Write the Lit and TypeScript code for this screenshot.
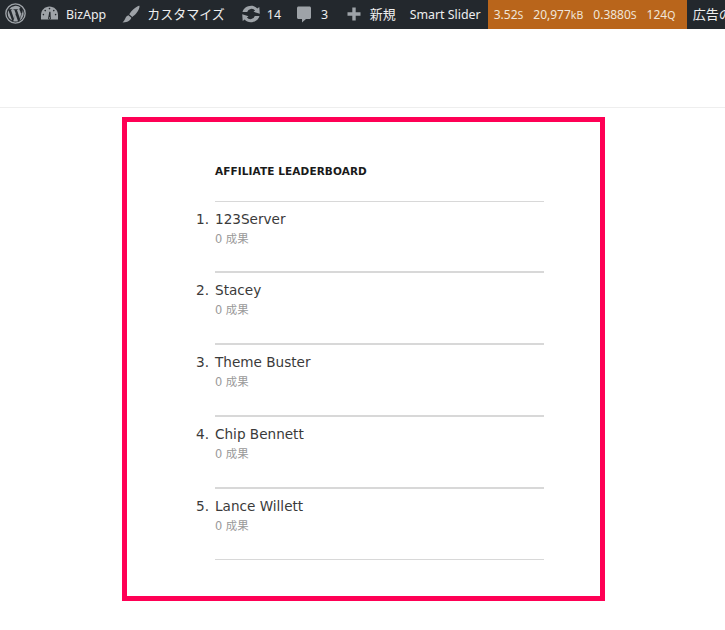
import { LitElement, html, css, svg } from "lit";
import { customElement } from "lit/decorators.js";

const ICONS = {
  wp: svg`<circle cx="10" cy="10" r="9.2" fill="none" stroke="currentColor" stroke-width="1.3"/><path fill="currentColor" d="M2.6 10c0 2.900 1.700 5.500 4.200 6.700L3.200 7A7.400 7.400 0 0 0 2.600 10zM15 9.600c0-.9-.3-1.600-.6-2.100-.4-.6-.7-1.100-.7-1.700 0-.7.500-1.300 1.200-1.300h.1A7.400 7.400 0 0 0 4 6h.5c.8 0 2-.1 2-.1.4 0 .5.600.1.600 0 0-.4.100-.9.100l2.800 8.300 1.700-5-1.200-3.300c-.4 0-.8-.1-.8-.1-.4 0-.4-.6 0-.6 0 0 1.300.1 2 .1.800 0 2-.1 2-.1.400 0 .5.600.1.600 0 0-.4.100-.9.100l2.800 8.200.8-2.600c.3-1.100.6-1.900.6-2.600zM10.100 10.700l-2.300 6.700a7.400 7.400 0 0 0 4.600-.1l-.1-.1zM16.700 6.400l.1.800c0 .8-.1 1.600-.6 2.800l-2.300 6.600A7.400 7.400 0 0 0 16.700 6.400z"/>`,
  gauge: svg`<path fill="currentColor" d="M1 15.500V11C1 6 5 2.500 9.500 2.500S18 6 18 11v4.500z"/><g fill="#23282d"><circle cx="9.500" cy="4.600" r=".8"/><circle cx="5.200" cy="6.600" r=".8"/><circle cx="13.800" cy="6.600" r=".8"/><circle cx="3.400" cy="10.600" r=".8"/><circle cx="15.600" cy="10.600" r=".8"/><path d="M8.300 13.200l1-5.400h1.200l.2 5.400a1.500 1.500 0 1 1-2.400 0z"/></g><circle cx="9.500" cy="14" r=".7" fill="currentColor"/>`,
  brush: svg`<path fill="currentColor" d="M18.500 1.700c.3 1.500-.8 4.600-3 7.400-1.300 1.600-2.800 3-4.200 3.800L8.200 10.300c1.100-1.800 2.700-3.800 4.500-5.300 2.500-2.100 5-3.700 5.800-3.300zM7.400 11.300l3 2.500c-.6 1.800-2 3.100-4.100 3.900-1.400.5-3.300.8-4.800.8 1.400-1.100 2.200-2.600 3-4.400.6-1.300 1.600-2.400 2.900-2.800z"/>`,
  update: svg`<path fill="currentColor" d="M10.300 1.800c2.500 0 4.600 1.100 6 2.800l2-1.500.5 6.600-6.300-1.900 1.600-1.200a4.500 4.500 0 0 0-7.900 1.400H1.500C2.300 4.600 5.900 1.800 10.300 1.800zM9.700 18.200c-2.500 0-4.600-1.100-6-2.800l-2 1.500-.5-6.600 6.300 1.900-1.600 1.200a4.500 4.500 0 0 0 7.900-1.400h4.700c-.8 3.400-4.400 6.200-8.800 6.200z"/>`,
  comment: svg`<path fill="currentColor" d="M4.500 2.500h11c.8 0 1.500.7 1.500 1.500v9.500c0 .8-.7 1.500-1.500 1.500H12l-4 3.500V15H4.500c-.8 0-1.500-.7-1.500-1.500V4c0-.8.700-1.500 1.500-1.500z"/>`,
  plus: svg`<path fill="currentColor" d="M8.300 3.500h3.400v4.800h4.800v3.400h-4.800v4.800H8.300v-4.800H3.500V8.300h4.800z"/>`,
};

const icon = (name: keyof typeof ICONS) =>
  html`<svg class="ico" viewBox="0 0 20 20" aria-hidden="true">${ICONS[name]}</svg>`;

const LEADERS = ["123Server", "Stacey", "Theme Buster", "Chip Bennett", "Lance Willett"];

@customElement("app-root")
export class AppRoot extends LitElement {
  static styles = css`
    :host {
      display: block;
      width: 725px;
      height: 630px;
      overflow: hidden;
      background: #fff;
      font-family: "DejaVu Sans", "Noto Sans CJK JP", sans-serif;
    }
    .bar {
      display: flex;
      align-items: center;
      height: 29px;
      background: #23282d;
      color: #eee;
      font: 12.4px/29px "Noto Sans", "Noto Sans CJK JP", sans-serif;
      white-space: nowrap;
      overflow: hidden;
    }
    .item {
      display: flex;
      align-items: center;
      flex: none;
    }
    .ico {
      width: 20px;
      height: 20px;
      margin-bottom: 2px;
      color: #9ea3a8;
      flex: none;
      display: block;
    }
    .cjk { font-size: 13px; }
    .wp { margin-left: 5px; }
    .wp .ico { width: 21px; height: 21px; margin-left: -0.5px; }
    .biz { margin-left: 14.500px; gap: 6px; }
    .cust { margin-left: 15px; gap: 6px; }
    .upd { margin-left: 16px; gap: 6px; }
    .com { margin-left: 13px; gap: 7px; }
    .new { margin-left: 15.500px; gap: 6px; }
    .slider { margin-left: 14px; }
    .perf {
      margin-left: 7px;
      width: 199px;
      height: 29px;
      box-sizing: border-box;
      padding-left: 6px;
      display: flex;
      gap: 10px;
      background: #b9651b;
      font-size: 12px;
      color: #f0e6da;
    }
    .perf small { font-size: 10.5px; }
    .ad { margin-left: 6px; }
    .head {
      height: 78px;
      border-bottom: 1px solid #eee;
    }
    .box {
      width: 483px;
      height: 484px;
      box-sizing: border-box;
      margin: 9px 0 0 122px;
      border: 5px solid #ff0055;
      padding: 41px 56px 0 88px;
    }
    .title {
      margin: 0;
      padding-bottom: 22px;
      border-bottom: 1px solid #d8d8d8;
      font: 700 10.5px/16px "DejaVu Sans", sans-serif;
      color: #1a1a1a;
      letter-spacing: 0.1px;
    }
    ol {
      list-style: none;
      margin: 0;
      padding: 0;
    }
    li {
      position: relative;
      height: 72px;
      padding-top: 7px;
      box-sizing: border-box;
      border-bottom: 2px solid #d8d8d8;
    }
    li:first-child { height: 71px; }
    li:last-child { height: 71px; border-bottom-width: 1px; }
    .num {
      position: absolute;
      right: 100%;
      margin-right: 6px;
      top: 7px;
      font-size: 13.7px;
      line-height: 20px;
      color: #3a3a3a;
    }
    .name {
      font-size: 13.6px;
      line-height: 20px;
      color: #3a3a3a;
    }
    .sub {
      font-size: 11.4px;
      line-height: 20px;
      color: #999;
    }
  `;

  render() {
    return html`
      <div class="bar">
        <span class="item wp">${icon("wp")}</span>
        <span class="item biz">${icon("gauge")}BizApp</span>
        <span class="item cust">${icon("brush")}<span class="cjk">カスタマイズ</span></span>
        <span class="item upd">${icon("update")}14</span>
        <span class="item com">${icon("comment")}3</span>
        <span class="item new">${icon("plus")}<span class="cjk">新規</span></span>
        <span class="item slider">Smart Slider</span>
        <span class="item perf">
          <span>3.52<small>S</small></span><span>20,977<small>kB</small></span><span>0.3880<small>S</small></span><span>124<small>Q</small></span>
        </span>
        <span class="item ad cjk">広告の</span>
      </div>
      <div class="head"></div>
      <div class="box">
        <h2 class="title">AFFILIATE LEADERBOARD</h2>
        <ol>
          ${LEADERS.map(
            (name, i) => html`<li>
              <span class="num">${i + 1}.</span>
              <div class="name">${name}</div>
              <div class="sub">0 成果</div>
            </li>`
          )}
        </ol>
      </div>
    `;
  }
}
